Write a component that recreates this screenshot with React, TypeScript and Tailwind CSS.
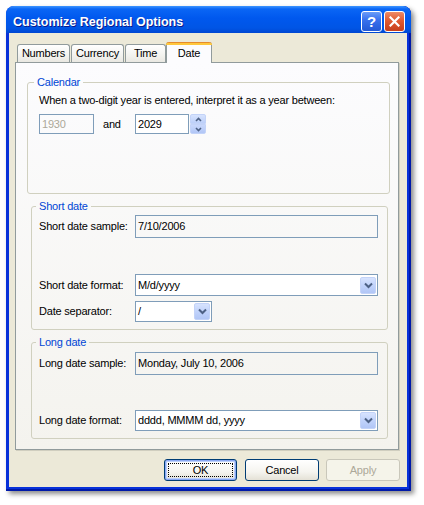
import React from "react";

function DropBtn() {
  return (
    <div className="w-[16px] h-[17px] mr-[1px] rounded-[2px] border border-[#c3d3f8] bg-[linear-gradient(180deg,#d7e3fe_0%,#c1d3fb_50%,#b1c6f6_100%)] flex items-center justify-center">
      <svg width="9" height="7" viewBox="0 0 9 7">
        <path d="M1 1.5 L4.5 5 L8 1.5" fill="none" stroke="#4D6185" strokeWidth="2" />
      </svg>
    </div>
  );
}

function Combo({ cls, text }: { cls: string; text: string }) {
  return (
    <div className={"flex items-center justify-between bg-white border border-[#7F9DB9] " + cls}>
      <span className="pl-[2px] whitespace-nowrap">{text}</span>
      <DropBtn />
    </div>
  );
}

function Field({ cls, text }: { cls: string; text: string }) {
  return (
    <div className={"flex items-center border border-[#7F9DB9] " + cls}>
      <span className="pl-[2px] whitespace-nowrap">{text}</span>
    </div>
  );
}

function Row({ label, children }: { label: string; children: React.ReactNode }) {
  return (
    <div className="flex items-center">
      <div className="w-[96px] whitespace-nowrap">{label}</div>
      {children}
    </div>
  );
}

function Tab({ label }: { label: string }) {
  return (
    <div className="h-[18px] border border-b-0 border-[#919B9C] rounded-t-[3px] bg-[linear-gradient(180deg,#ffffff_0%,#f3f3ef_60%,#e9e8e2_100%)] flex items-center justify-center">
      {label}
    </div>
  );
}

export default function App() {
  return (
    <div className="w-[424px] h-[505px] bg-white pt-[6px] pl-[6px] font-['Liberation_Sans',Arial,sans-serif] text-[11px] tracking-[-0.2px] text-black leading-[13px]">
      <div className="w-[405px] h-[485px] flex flex-col rounded-t-[8px] bg-[#0831D9] shadow-[3px_3px_5px_rgba(0,0,0,0.45),inset_-2px_0_0_#0019A8,inset_0_-2px_0_#0019A8]">
        {/* Title bar */}
        <div className="h-[27px] rounded-t-[8px] bg-[linear-gradient(180deg,#3d95ff_0px,#0a66f5_3px,#0058ee_12px,#0055e5_22px,#0047d2_27px)] flex items-start justify-between pl-[7px] pr-[6px]">
          <span className="mt-[9px] text-white font-bold text-[12.5px] tracking-[0px] leading-[15px] [text-shadow:1px_1px_#0a1a8c] whitespace-nowrap">
            Customize Regional Options
          </span>
          <div className="flex gap-[2px] mt-[5px]">
            <div className="w-[21px] h-[21px] rounded-[3px] border border-white bg-[linear-gradient(180deg,#6a9cf8_0%,#3a72ee_40%,#2259d6_100%)] flex items-center justify-center text-white font-bold text-[15px] leading-[15px] tracking-[0px]">
              ?
            </div>
            <div className="w-[21px] h-[21px] rounded-[3px] border border-white bg-[linear-gradient(180deg,#ed8b68_0%,#e15a31_45%,#c63e1b_100%)] flex items-center justify-center">
              <svg width="11" height="11" viewBox="0 0 11 11">
                <path d="M1.5 1.5 L9.5 9.5 M9.5 1.5 L1.5 9.5" stroke="white" strokeWidth="2.2" strokeLinecap="square" />
              </svg>
            </div>
          </div>
        </div>

        {/* Client area */}
        <div className="flex-1 ml-[3px] mr-[4px] mb-[4px] bg-[#ECE9D8] flex flex-col pt-[9px]">
          <div className="pl-[6px]">
            {/* Tabs */}
            <div className="h-[20px] flex items-end pl-[2px]">
              <div className="w-[53px]"><Tab label="Numbers" /></div>
              <div className="w-[53px] ml-[1px]"><Tab label="Currency" /></div>
              <div className="w-[41px] ml-[1px]"><Tab label="Time" /></div>
              <div className="relative z-10 -mb-px w-[46px] h-[21px] border-x border-[#919B9C] rounded-t-[3px] bg-[#fcfcfe] flex flex-col">
                <div className="h-[3px] rounded-t-[3px] -mx-px bg-[linear-gradient(180deg,#e68b2c_0px,#e68b2c_1px,#ffc73c_1px,#ffc73c_3px)]" />
                <div className="flex-1 flex items-center justify-center pb-[2px]">Date</div>
              </div>
            </div>

            {/* Panel */}
            <div className="w-[384px] h-[388px] border border-[#919B9C] bg-[linear-gradient(180deg,#fcfcfe,#f4f3ee)] shadow-[1px_1px_0_#d0cebf] flex flex-col">
              {/* Calendar */}
              <fieldset className="ml-[11px] mt-[13px] w-[363px] h-[118px] border border-[#D0D0BF] rounded-[3px] pl-[6px]">
                <legend className="px-[3px] text-[#0046D5] leading-[13px]">Calendar</legend>
                <div className="pl-[5px] pt-[4px]">
                  <div className="leading-[14px] whitespace-nowrap">
                    When a two-digit year is entered, interpret it as a year between:
                  </div>
                  <div className="mt-[7px] flex items-center h-[20px]">
                    <div className="w-[55px] h-[20px] border border-[#7F9DB9] flex items-center text-[#ACA899]">
                      <span className="pl-[2px]">1930</span>
                    </div>
                    <span className="ml-[9px] w-[32px]">and</span>
                    <div className="w-[54px] h-[20px] border border-[#7F9DB9] bg-white flex items-center">
                      <span className="pl-[2px]">2029</span>
                    </div>
                    <div className="ml-[1px] w-[16px] h-[20px] flex flex-col">
                      <div className="h-[10px] rounded-t-[2px] border border-[#c3d3f8] bg-[linear-gradient(180deg,#d7e3fe,#bccff9)] flex items-center justify-center">
                        <svg width="7" height="5" viewBox="0 0 7 5">
                          <path d="M1 4 L3.5 1.5 L6 4" fill="none" stroke="#4D6185" strokeWidth="1.6" />
                        </svg>
                      </div>
                      <div className="h-[10px] rounded-b-[2px] border border-[#c3d3f8] bg-[linear-gradient(180deg,#c9d8fc,#b1c6f6)] flex items-center justify-center">
                        <svg width="7" height="5" viewBox="0 0 7 5">
                          <path d="M1 1 L3.5 3.5 L6 1" fill="none" stroke="#4D6185" strokeWidth="1.6" />
                        </svg>
                      </div>
                    </div>
                  </div>
                </div>
              </fieldset>

              {/* Short date */}
              <fieldset className="ml-[15px] mt-[6px] w-[357px] h-[130px] border border-[#D0D0BF] rounded-[3px] pl-[4px]">
                <legend className="px-[3px] text-[#0046D5] leading-[13px]">Short date</legend>
                <div className="pl-[3px] pt-[2px]">
                  <Row label="Short date sample:">
                    <Field cls="w-[243px] h-[23px]" text="7/10/2006" />
                  </Row>
                  <div className="mt-[36px]">
                    <Row label="Short date format:">
                      <Combo cls="w-[243px] h-[22px]" text="M/d/yyyy" />
                    </Row>
                  </div>
                  <div className="mt-[5px]">
                    <Row label="Date separator:">
                      <Combo cls="w-[77px] h-[21px]" text="/" />
                    </Row>
                  </div>
                </div>
              </fieldset>

              {/* Long date */}
              <fieldset className="ml-[15px] mt-[6px] w-[357px] h-[103px] border border-[#D0D0BF] rounded-[3px] pl-[4px]">
                <legend className="px-[3px] text-[#0046D5] leading-[13px]">Long date</legend>
                <div className="pl-[3px] pt-[3px]">
                  <Row label="Long date sample:">
                    <Field cls="w-[243px] h-[23px]" text="Monday, July 10, 2006" />
                  </Row>
                  <div className="mt-[35px]">
                    <Row label="Long date format:">
                      <Combo cls="w-[243px] h-[21px]" text="dddd, MMMM dd, yyyy" />
                    </Row>
                  </div>
                </div>
              </fieldset>
            </div>
          </div>

          {/* Buttons */}
          <div className="mt-[9px] flex justify-end pr-[7px]">
            <div className="w-[73px] h-[22px] rounded-[3px] border border-[#003C74] bg-[linear-gradient(180deg,#ffffff_0%,#f5f4ef_60%,#e4e1d6_100%)] shadow-[inset_0_0_0_1px_#8aa8f3,inset_0_0_0_2px_#bcd0fb] flex items-center justify-center p-[3px]">
              <div className="w-full h-full border border-dotted border-black flex items-center justify-center">
                OK
              </div>
            </div>
            <div className="ml-[8px] w-[74px] h-[22px] rounded-[3px] border border-[#003C74] bg-[linear-gradient(180deg,#ffffff_0%,#f5f4ef_60%,#e4e1d6_100%)] flex items-center justify-center">
              Cancel
            </div>
            <div className="ml-[7px] w-[74px] h-[22px] rounded-[3px] border border-[#C9C7BA] bg-[#F5F4EA] text-[#ACA899] flex items-center justify-center">
              Apply
            </div>
          </div>
        </div>
      </div>
    </div>
  );
}
